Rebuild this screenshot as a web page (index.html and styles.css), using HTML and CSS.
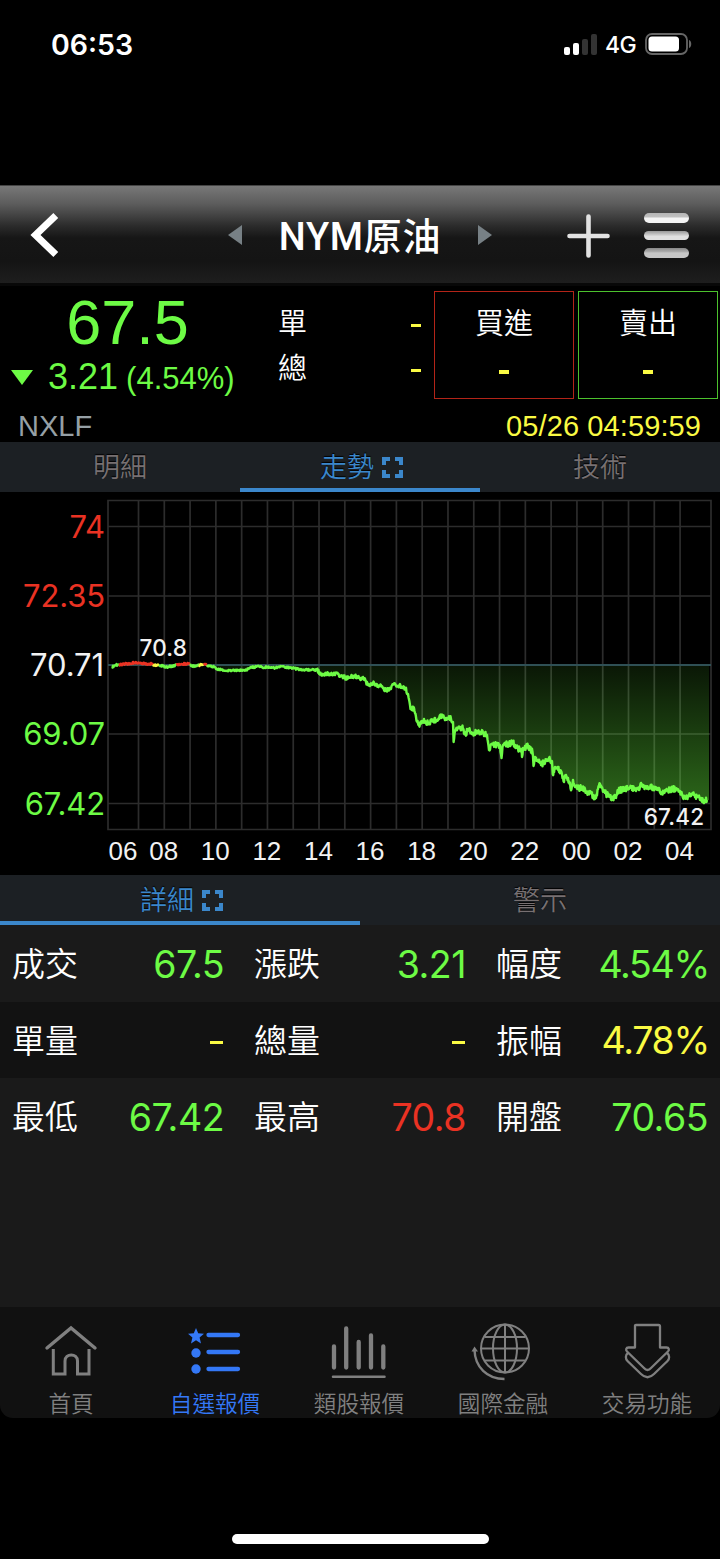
FILE: index.html
```html
<!DOCTYPE html>
<html lang="zh-Hant">
<head>
    <meta charset="UTF-8">
    <meta name="viewport" content="width=device-width, initial-scale=1.0">
    <title>NYM原油</title>
    <link rel="stylesheet" href="styles.css">
</head>
<body>
    <div class="status-bar">
        <span class="clock">06:53</span>
        <div class="status-icons">
            <svg class="signal" width="33" height="21" viewBox="0 0 33 21">
                <rect x="0" y="13" width="6" height="8" rx="2" fill="#fff"/>
                <rect x="9" y="9" width="6" height="12" rx="2" fill="#fff"/>
                <rect x="18" y="5" width="6" height="16" rx="2" fill="#333"/>
                <rect x="27" y="0" width="6" height="21" rx="2" fill="#333"/>
            </svg>
            <span class="network">4G</span>
            <svg class="battery" width="47" height="22" viewBox="0 0 47 22">
                <rect x="1" y="1" width="41" height="20" rx="6" fill="none" stroke="#666" stroke-width="1.8"/>
                <rect x="3.5" y="3.5" width="30.5" height="15" rx="3.5" fill="#fff"/>
                <path d="M44 7 C47 8 47 14 44 15 Z" fill="#666"/>
            </svg>
        </div>
    </div>

    <header class="navbar">
        <svg class="back" width="29" height="46" viewBox="0 0 29 46">
            <path d="M25.8 3.5 L5.5 23 L25.8 42.5" fill="none" stroke="#fff" stroke-width="7"/>
        </svg>
        <div class="title">
            <span class="arrow prev"></span>
            <h1>NYM原油</h1>
            <span class="arrow next"></span>
        </div>
        <div class="actions">
            <svg width="43" height="44" viewBox="0 0 43 44">
                <path d="M21.5 2.5 V41.5 M2.5 22 H40.5" stroke="#e2e2e2" stroke-width="4.6" stroke-linecap="round"/>
            </svg>
            <div class="menu">
                <span></span>
                <span></span>
                <span></span>
            </div>
        </div>
    </header>

    <section class="quote">
        <div class="quote-main">
            <div class="price">
                <div class="last">67.5</div>
                <div class="change">
                    <span class="down"></span>
                    <span class="diff">3.21</span>
                    <span class="percent">(4.54%)</span>
                </div>
            </div>
            <div class="volume">
                <div><span>單</span><i class="dash"></i></div>
                <div><span>總</span><i class="dash"></i></div>
            </div>
            <div class="order buy"><span>買進</span><i class="dash"></i></div>
            <div class="order sell"><span>賣出</span><i class="dash"></i></div>
        </div>
        <div class="quote-info">
            <span class="code">NXLF</span>
            <span class="time">05/26 04:59:59</span>
        </div>
    </section>

    <div class="tabs">
        <div class="tab">明細</div>
        <div class="tab active">走勢
            <svg class="expand" width="21" height="21" viewBox="0 0 21 21"><path d="M2 8 V2 H8 M13 2 H19 V8 M19 13 V19 H13 M8 19 H2 V13"/></svg>
        </div>
        <div class="tab">技術</div>
    </div>

    <svg class="chart" id="chart" width="720" height="383" viewBox="0 492 720 383">
        <defs>
            <linearGradient id="area" gradientUnits="userSpaceOnUse" x1="0" y1="665" x2="0" y2="803">
                <stop offset="0" stop-color="#6dff40" stop-opacity="0.09"/>
                <stop offset="1" stop-color="#6dff40" stop-opacity="0.4"/>
            </linearGradient>
        </defs>
        <g id="grid" class="grid-lines"></g>
        <path id="fill" fill="url(#area)"/>
        <path class="base-line" d="M108 665 H711"/>
        <g id="lines" class="price-line"></g>
        <g class="axis-y">
            <text class="up" x="105" y="537.5">74</text>
            <text class="up" x="105" y="607">72.35</text>
            <text x="104" y="676">70.71</text>
            <text class="fall" x="105" y="745">69.07</text>
            <text class="fall" x="105" y="814.5">67.42</text>
        </g>
        <g id="hours" class="axis-x"></g>
        <text class="mark" x="163.3" y="656">70.8</text>
        <text class="mark" x="674" y="825">67.42</text>
    </svg>

    <div class="tabs tabs-detail">
        <div class="tab active">詳細
            <svg class="expand" width="21" height="21" viewBox="0 0 21 21"><path d="M2 8 V2 H8 M13 2 H19 V8 M19 13 V19 H13 M8 19 H2 V13"/></svg>
        </div>
        <div class="tab">警示</div>
    </div>

    <section class="detail">
        <div class="row">
            <div class="cell"><span>成交</span><b class="green">67.5</b></div>
            <div class="cell"><span>漲跌</span><b class="green">3.21</b></div>
            <div class="cell"><span>幅度</span><b class="green percent-value">4.54%</b></div>
        </div>
        <div class="row dark">
            <div class="cell"><span>單量</span><i class="dash"></i></div>
            <div class="cell"><span>總量</span><i class="dash"></i></div>
            <div class="cell"><span>振幅</span><b class="yellow percent-value">4.78%</b></div>
        </div>
        <div class="row">
            <div class="cell"><span>最低</span><b class="green">67.42</b></div>
            <div class="cell"><span>最高</span><b class="red">70.8</b></div>
            <div class="cell"><span>開盤</span><b class="green">70.65</b></div>
        </div>
    </section>

    <nav class="tabbar">
        <a class="item">
            <svg width="60" height="60" viewBox="0 0 60 60">
                <path d="M6 27 L30 7 L54 27" stroke-width="3.4" stroke-linecap="round"/>
                <path d="M12.3 28 V53 H24 V40 C24 32 36.5 32 36.5 40 V53 H48 V28" stroke-width="3"/>
            </svg>
            <span>首頁</span>
        </a>
        <a class="item active">
            <svg width="60" height="60" viewBox="0 0 60 60">
                <path class="solid" d="M11 7 L13.2 12.3 L19 12.8 L14.600 16.600 L16 22.400 L11 19.300 L6 22.400 L7.400 16.600 L3 12.800 L8.800 12.300 Z"/>
                <circle class="solid" cx="11" cy="32" r="4.7"/>
                <circle class="solid" cx="11" cy="48" r="4.7"/>
                <path d="M23.500 14 H53 M23.500 31 H53 M23.500 48 H53" stroke-width="4.3" stroke-linecap="round"/>
            </svg>
            <span>自選報價</span>
        </a>
        <a class="item">
            <svg width="60" height="60" viewBox="0 0 60 60">
                <path d="M5 25.5 V46.5 M17.200 7.500 V46.500 M29.700 21 V46.500 M42 14.500 V46.500 M54.300 25.500 V46.500" stroke-width="4.3" stroke-linecap="round"/>
                <path d="M4 55.8 H55.500" stroke-width="2.5" stroke-linecap="round"/>
            </svg>
            <span>類股報價</span>
        </a>
        <a class="item">
            <svg width="60" height="60" viewBox="0 0 60 60">
                <g stroke-width="2">
                    <circle cx="32" cy="27.5" r="24"/>
                    <ellipse cx="32" cy="27.5" rx="12" ry="24"/>
                    <path d="M32 3.5 V51.5 M8 27.5 H56 M12 16 H52 M12 39.5 H52"/>
                    <path d="M1.5 29 C2 46 14 58 31.5 58" stroke-width="2.4"/>
                </g>
                <path class="solid" d="M1.5 25.5 L5 30.5 H-1.5 Z"/>
            </svg>
            <span>國際金融</span>
        </a>
        <a class="item">
            <svg width="60" height="60" viewBox="0 0 60 60" stroke-width="2.3" stroke-linejoin="round">
                <path d="M18 4.5 Q18 4 19 4 H41.5 Q43 4 43 5.5 V26.5 H49.5 C52 26.5 52.5 29 51 30.5 L34 47 Q30.5 51 27 47 L10 30.5 C8.5 29 9 26.5 11.5 26.5 H18 Z"/>
                <path d="M11 32 C8 34 8.5 38 10.5 40 L24 53 Q30.5 59.5 37 53 L50.5 40 C52.5 38 53 34 50 32"/>
            </svg>
            <span>交易功能</span>
        </a>
    </nav>

    <div class="home-indicator"></div>

    <script src="script.js"></script>
</body>
</html>
```
FILE: styles.css
```css
* {
    box-sizing: border-box;
}

body {
    font-family: Inter, "Noto Sans CJK TC", sans-serif;
    background: #000;
    color: #fff;
    margin: 0;
    width: 720px;
    height: 1559px;
    display: flex;
    flex-direction: column;
    overflow: hidden;
}

svg {
    display: block;
    flex: none;
    overflow: visible;
}

/* status bar */
.status-bar {
    height: 185px;
    padding: 26px 28px 0 51px;
    display: flex;
    justify-content: space-between;
    align-items: flex-start;
}

.clock {
    font-size: 28.5px;
    line-height: 37px;
    font-weight: 600;
}

.status-icons {
    display: flex;
    align-items: center;
    height: 36px;
}

.network {
    font-size: 23px;
    font-weight: 500;
    width: 31px;
    margin: 2px 9px 0 8px;
    letter-spacing: -0.5px;
}

/* navbar */
.navbar {
    height: 101px;
    padding: 0 31px 3px 30px;
    display: grid;
    grid-template-columns: 1fr auto 1fr;
    align-items: center;
    background: linear-gradient(#787878 0, #5c5c5c 18%, #2b2b2b 40%, #161616 52%, #141414 75%, #1e1e1e 97%, #080808 97%);
    border-top: 1px solid #444;
}

.title {
    display: flex;
    align-items: center;
    justify-content: space-between;
    width: 264px;
    margin-left: 1px;
}

.title h1 {
    margin: 0;
    font-family: Roboto, "Noto Sans CJK TC", sans-serif;
    font-size: 38px;
    line-height: 50px;
    font-weight: 500;
    letter-spacing: 0.7px;
    white-space: nowrap;
    padding-top: 4px;
}

.arrow {
    border-top: 10.5px solid transparent;
    border-bottom: 10.5px solid transparent;
}

.prev {
    border-right: 14px solid #778085;
}

.next {
    border-left: 14px solid #778085;
}

.actions {
    display: flex;
    justify-content: flex-end;
    align-items: center;
    gap: 34px;
    padding-top: 2px;
}

.menu {
    width: 45px;
    display: flex;
    flex-direction: column;
    gap: 8px;
}

.menu span {
    height: 9.5px;
    border-radius: 5px;
    background: linear-gradient(#b5b5b5 0, #c0c0c0 40%, #f4f4f4 50%);
}

.menu span:nth-child(2) {
    background: linear-gradient(#989898, #e0e0e0 60%);
}

.menu span:nth-child(3) {
    background: linear-gradient(#888, #aaa 35%, #c6c6c6 50%);
}

/* quote */
.quote {
    height: 156px;
    padding: 5px 2px 0 0;
    font-family: "Liberation Sans", "Noto Sans CJK TC", sans-serif;
}

.quote-main {
    display: flex;
    height: 108px;
}

.price {
    width: 278px;
    color: #6dfb45;
}

.last {
    font-size: 63px;
    line-height: 62px;
    width: 255px;
    text-align: center;
}

.change {
    display: flex;
    align-items: baseline;
    margin-top: 4px;
    line-height: 40px;
    padding-left: 11px;
}

.down {
    border: 11.5px solid transparent;
    border-top: 15px solid #6dfb45;
    border-bottom: 0;
    align-self: center;
    margin-top: -2px;
}

.diff {
    font-size: 36px;
    margin-left: 15px;
}

.percent {
    font-size: 31px;
    margin-left: 8px;
}

.dash {
    display: block;
    width: 10px;
    height: 3px;
    background: #fafa43;
}

.volume {
    width: 156px;
    padding: 11px 13px 0 0;
    font-size: 29px;
    line-height: 45px;
    font-weight: 350;
}

.volume div {
    display: flex;
    justify-content: space-between;
    align-items: center;
}

.volume .dash {
    margin-top: 1px;
}

.order {
    width: 140px;
    border: 1px solid #b32418;
    display: flex;
    flex-direction: column;
    align-items: center;
    font-size: 29px;
    line-height: 36px;
    padding-top: 14px;
    font-weight: 350;
}

.order .dash {
    margin-top: 28px;
    height: 4px;
}

.sell {
    border-color: #4cc12d;
    margin-left: 4px;
}

.quote-info {
    display: flex;
    justify-content: space-between;
    padding: 9px 17px 0 18px;
    font-size: 29px;
    line-height: 36px;
}

.code {
    color: #96a0a6;
}

.time {
    color: #fafa43;
    letter-spacing: 0.1px;
}

/* tabs */
.tabs {
    display: grid;
    grid-auto-flow: column;
    grid-auto-columns: 1fr;
    height: 50px;
    flex: none;
    background: #1c2024;
}

.tab {
    display: flex;
    justify-content: center;
    align-items: center;
    gap: 8px;
    padding-top: 6px;
    color: #777072;
    font-size: 27px;
    line-height: 40px;
    font-weight: 350;
    text-shadow: 0 -1px 1px #000;
    border-bottom: 4px solid transparent;
}

.tab.active {
    color: #3b87cb;
    border-color: #3b87cb;
    padding-left: 3px;
}

.expand {
    fill: none;
    stroke: #3b87cb;
    stroke-width: 4;
    margin-top: -2px;
}

/* chart */
.grid-lines {
    fill: none;
    stroke: #2c2c2c;
    stroke-width: 1.7;
}

.base-line {
    stroke: #2f5055;
    stroke-width: 2;
}

.price-line {
    fill: none;
    stroke-width: 2.4;
    stroke-linejoin: round;
}

.axis-y {
    font-size: 31px;
    letter-spacing: -0.1px;
    text-anchor: end;
    fill: #f2f2f2;
}

.axis-y .up {
    fill: #ea3223;
}

.axis-y .fall {
    fill: #6dfb45;
}

.axis-x {
    font-family: "Liberation Sans", sans-serif;
    font-size: 26px;
    text-anchor: middle;
    fill: #f2f2f2;
}

.mark {
    font-size: 22.5px;
    font-weight: 500;
    letter-spacing: 0.2px;
    text-anchor: middle;
    fill: #f2f2f2;
}

/* detail */
.detail {
    height: 382px;
    background: #1a1a1a;
}

.row {
    display: grid;
    grid-template-columns: 242px 242px 236px;
    height: 76.5px;
}

.dark {
    background: #121212;
}

.cell {
    display: flex;
    justify-content: space-between;
    align-items: center;
    padding: 0 18px 0 12px;
}

.cell:last-child {
    padding-right: 12px;
}

.cell span {
    font-size: 33px;
    font-weight: 350;
    margin-top: -2px;
}

.cell b {
    font-size: 37.5px;
    font-weight: 400;
    letter-spacing: -0.5px;
    padding-top: 2px;
}

.cell .percent-value {
    letter-spacing: -1.3px;
    margin-right: -1px;
}

.cell .dash {
    width: 13px;
    margin: 6px 1px 0 0;
}

.green {
    color: #6dfb45;
}

.yellow {
    color: #fafa43;
}

.red {
    color: #ea3223;
}

/* bottom tab bar */
.tabbar {
    display: flex;
    height: 111px;
    flex: none;
    background: #111;
    border-radius: 0 0 13px 13px;
}

.item {
    flex: 1;
    display: flex;
    flex-direction: column;
    align-items: center;
    padding: 14px 2px 0 0;
    color: #808080;
    font-size: 22.6px;
    line-height: 32px;
    font-weight: 350;
}

.item svg {
    fill: none;
    stroke: currentColor;
}

.item .solid {
    fill: currentColor;
    stroke: none;
}

.item span {
    margin-top: 7px;
}

.item.active {
    color: #3478f6;
}

.home-indicator {
    width: 257px;
    height: 10px;
    margin: 116px auto 0;
    border-radius: 5px;
    background: #fff;
}
```
FILE: script.js
```js
var NS = 'http://www.w3.org/2000/svg';
var GREEN = '#6dfb45', RED = '#ea3223', YELLOW = '#fafa43';

function add(parent, name, attrs, text) {
    var el = document.createElementNS(NS, name);
    for (var key in attrs) el.setAttribute(key, attrs[key]);
    if (text) el.textContent = text;
    document.getElementById(parent).appendChild(el);
}

// grid
var grid = 'M108 500.5 H711 V829.5 H108 Z';
[526.5, 596, 734, 803.5].forEach(function (y) { grid += ' M108 ' + y + ' H711'; });
for (var i = 0; i < 22; i++) grid += ' M' + (138.5 + i * 25.79) + ' 500.5 V829.5';
add('grid', 'path', { d: grid });

// hour labels
['06', '08', '10', '12', '14', '16', '18', '20', '22', '00', '02', '04'].forEach(function (h, n) {
    add('hours', 'text', { x: n ? 163.7 + (n - 1) * 51.58 : 123, y: 860 }, h);
});

// price points: x, y
var points = [
    [112, 667], [116, 665], [119, 665], [124, 664], [130, 663.5], [135, 662.5], [141, 663.5], [152, 664],
    [154, 665], [159, 665], [166, 667], [174, 666], [176, 664.5], [181, 664], [190, 664], [191, 666],
    [197, 666], [200, 665], [204, 665], [205, 664], [207, 665], [210, 666], [215, 667], [217, 669],
    [226, 671], [230, 670], [245, 670.5], [250, 668], [256, 666.5], [275, 668], [281, 666.5], [290, 667.5],
    [300, 669.5], [317, 670], [321, 674.5], [330, 674], [337, 673], [341, 676], [346, 678], [355, 676],
    [360, 679], [363, 677], [368, 685], [373, 683], [380, 686], [384, 690], [391, 689], [393, 684],
    [398, 686], [404, 687], [408, 694], [410.5, 709], [414, 708], [416, 717], [418.5, 725], [422, 721],
    [428, 723], [437, 720], [442, 714.5], [446, 718], [451, 719], [453, 722], [453.6, 742], [455, 731],
    [462, 727], [465.5, 734], [469, 729], [473, 733], [480, 732], [487, 735], [489, 750], [492, 744],
    [500, 745], [501.5, 758], [503, 745], [513, 743], [518, 749], [521.5, 749], [522, 757], [523, 748],
    [528, 746], [532.5, 752], [533.5, 766], [535, 757], [541, 765], [546, 761], [549, 758], [552, 761],
    [552.7, 774], [555, 767], [561, 771], [563.5, 781], [566, 775], [571.5, 789], [573, 780], [575, 787],
    [585, 789], [586, 793], [590, 791], [595, 799], [600, 784], [605, 793], [610, 797], [616, 798],
    [618, 791], [625, 789], [631, 786], [636, 791], [639, 790], [641.5, 784], [645, 787], [659, 788],
    [661, 794], [667, 790], [673, 789], [680, 791], [683, 798], [694, 795], [701, 798], [703.5, 803],
    [705, 800], [707, 800]
];

function colorAt(x) {
    if (x >= 119 && x < 153 || x >= 176 && x < 190 || x >= 204 && x < 207) return RED;
    if (x >= 153 && x < 159 || x >= 199 && x < 204) return YELLOW;
    return GREEN;
}

// fill in two ticks per pixel between the points
var ticks = [];
for (var p = 0; p < points.length - 1; p++) {
    var a = points[p], b = points[p + 1];
    var steps = Math.max(1, Math.round((b[0] - a[0]) * 2));
    for (var s = 0; s < steps; s++) {
        var x = a[0] + (b[0] - a[0]) * s / steps;
        var noise = Math.sin(x * 12.9898) * 43758.5453;
        noise = noise - Math.floor(noise) - 0.5;
        var size = x < 317 ? 2 : x < 400 ? 4 : 6;
        ticks.push([x, a[1] + (b[1] - a[1]) * s / steps + (s ? noise * size : 0)]);
    }
}
ticks.push(points[points.length - 1]);

var area = 'M112 665';
ticks.forEach(function (t) { area += ' L' + t[0].toFixed(1) + ' ' + Math.max(665, t[1]).toFixed(1); });
document.getElementById('fill').setAttribute('d', area + ' H709 V665 Z');

var start = 0;
for (var k = 1; k < ticks.length; k++) {
    if (k === ticks.length - 1 || colorAt(ticks[k][0]) !== colorAt(ticks[start][0])) {
        add('lines', 'path', {
            d: 'M' + ticks.slice(start, k + 1).map(function (t) { return t[0].toFixed(1) + ' ' + t[1].toFixed(1); }).join(' L'),
            stroke: colorAt(ticks[start][0])
        });
        start = k;
    }
}
```
